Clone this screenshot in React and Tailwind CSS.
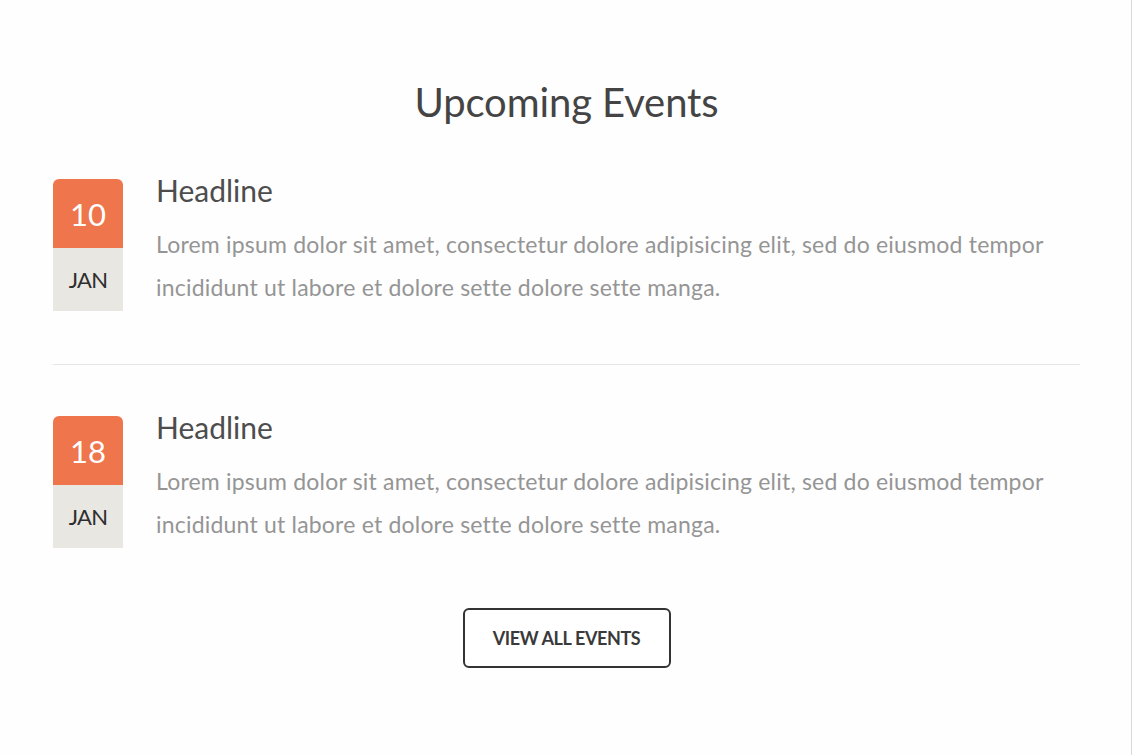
const events = [
  { day: "10", month: "JAN" },
  { day: "18", month: "JAN" },
];

const EventItem = ({ day, month }) => (
  <div className="flex items-start gap-[33px]">
    {/* Date badge */}
    <div className="w-[70px] shrink-0">
      <div className="h-[69px] bg-[#ef754c] rounded-t-[6px] flex items-center justify-center text-white text-[31px] leading-none pt-[1px]">
        {day}
      </div>
      <div className="h-[63px] bg-[#e8e7e2] flex items-center justify-center text-[#2e2e2e] text-[22px] tracking-[-0.8px]">
        {month}
      </div>
    </div>

    {/* Text */}
    <div className="flex-1 min-w-0 -mt-[8px]">
      <h3 className="text-[30px] leading-[38px] text-[#4d4d4d]">Headline</h3>
      <p className="mt-[14px] text-[23px] leading-[43px] text-[#959595] tracking-[0.2px]">
        Lorem ipsum dolor sit amet, consectetur dolore adipisicing elit, sed do eiusmod tempor
        <br />
        incididunt ut labore et dolore sette dolore sette manga.
      </p>
    </div>
  </div>
);

export default function App() {
  return (
    <div
      className="w-[1133px] h-[755px] bg-white flex"
      style={{ fontFamily: "Lato, 'Open Sans', sans-serif" }}
    >
      <div className="w-[1132px] h-full border-r border-[#d9d9d9] bg-[#fefefe]">
        <div className="px-[53px] pt-[78px] w-[1133px]">
          <h2 className="text-center text-[40px] leading-[48px] text-[#444444] tracking-[-0.1px]">
            Upcoming Events
          </h2>

          <div className="w-[1027px] mt-[53px]">
            <EventItem {...events[0]} />
            <div className="h-px bg-[#e6e6e6] mt-[53px] mb-[51px]" />
            <EventItem {...events[1]} />
          </div>

          <div className="w-[1027px] flex justify-center mt-[60px]">
            <button className="w-[208px] h-[60px] border-2 border-[#333333] rounded-[6px] text-[18px] font-bold text-[#3a3a3a] tracking-[-0.4px] bg-white">
              VIEW ALL EVENTS
            </button>
          </div>
        </div>
      </div>
    </div>
  );
}
